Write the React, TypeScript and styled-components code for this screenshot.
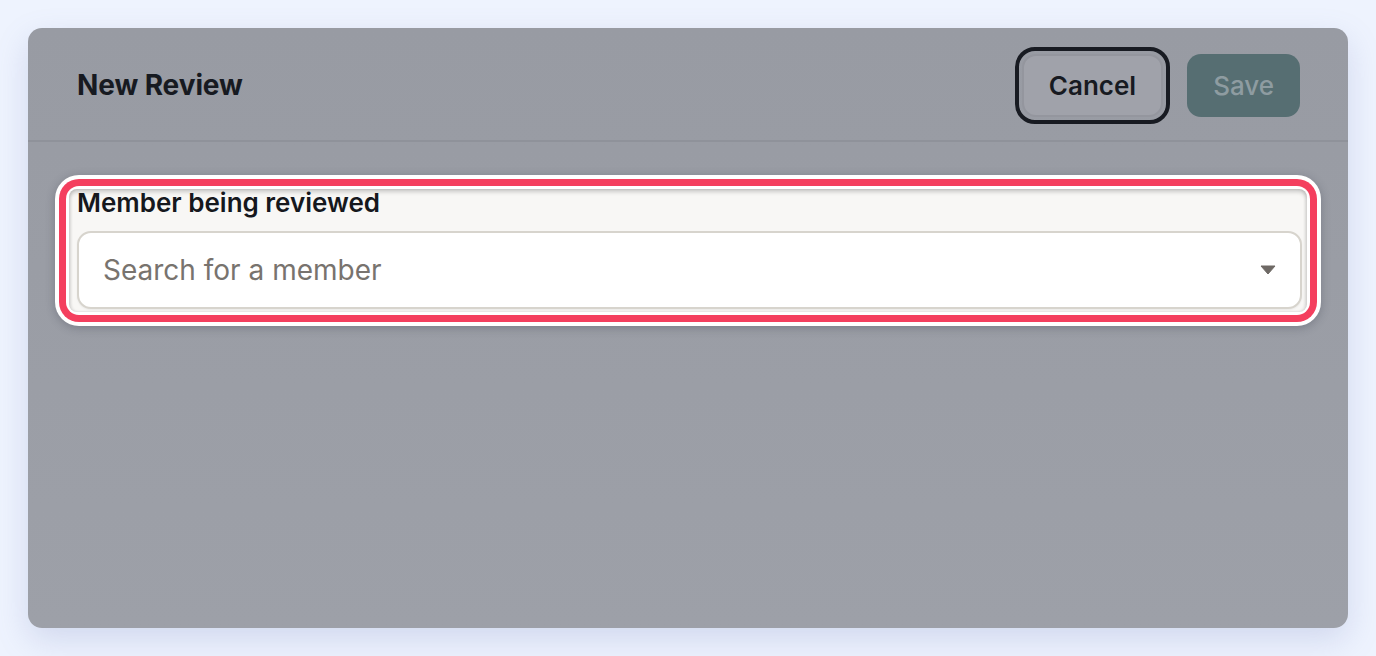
import React from "react";
import styled, { createGlobalStyle } from "styled-components";

const GlobalStyle = createGlobalStyle`
  * { box-sizing: border-box; }
  html, body {
    margin: 0;
    background: #eef3fe;
    font-family: Inter, "Noto Sans", "DejaVu Sans", sans-serif;
  }
`;

const Page = styled.div`
  padding: 28px;
`;

const Card = styled.div`
  height: 600px;
  border-radius: 14px;
  background: linear-gradient(#989ba3, #9da0a8);
  box-shadow: 0 12px 32px rgba(110, 125, 180, 0.22);
  overflow: hidden;
  display: flex;
  flex-direction: column;
`;

const Header = styled.div`
  height: 114px;
  flex: none;
  display: flex;
  align-items: center;
  justify-content: space-between;
  padding: 2px 48px 0 49px;
  border-bottom: 2px solid #8f929a;
`;

const Title = styled.h2`
  margin: 0;
  font-size: 28px;
  font-weight: 700;
  color: #171a21;
  letter-spacing: -0.1px;
`;

const Actions = styled.div`
  display: flex;
  align-items: center;
  gap: 17px;
`;

const FocusRing = styled.div`
  padding: 3px;
  border: 4px solid #181b22;
  border-radius: 20px;
`;

const Button = styled.button<{ $primary?: boolean }>`
  height: 63px;
  padding: 0 ${(p) => (p.$primary ? "26px" : "25px")};
  border-radius: 14px;
  font-family: inherit;
  font-size: 26px;
  cursor: pointer;
  border: ${(p) => (p.$primary ? "none" : "2px solid #94969e")};
  background: ${(p) => (p.$primary ? "#566e72" : "#a0a2aa")};
  color: ${(p) => (p.$primary ? "#8e9ca1" : "#171a21")};
  font-weight: ${(p) => (p.$primary ? 500 : 600)};
`;

const Body = styled.div`
  padding: 33px 27px;
`;

const Spotlight = styled.div`
  padding: 4px;
  border-radius: 24px;
  background: #ffffff;
  box-shadow: 0 2px 10px rgba(40, 44, 60, 0.28);
`;

const Ring = styled.div`
  padding: 7px;
  border-radius: 20px;
  background: #f43f5e;
`;

const Inner = styled.div`
  padding: 3px;
  border-radius: 13px;
  background: #ffffff;
`;

const Field = styled.div`
  display: flex;
  flex-direction: column;
  gap: 15px;
  padding: 0 5px 3px 8px;
  border-radius: 8px;
  background: #f8f7f5;
  box-shadow: inset 0 3px 4px rgba(0, 0, 0, 0.18), inset 2px 0 3px rgba(0, 0, 0, 0.08),
    inset -2px 0 3px rgba(0, 0, 0, 0.08);
`;

const Label = styled.label`
  font-size: 26px;
  font-weight: 600;
  line-height: 27px;
  color: #16181d;
`;

const Select = styled.div`
  height: 78px;
  display: flex;
  align-items: center;
  justify-content: space-between;
  padding: 0 24px;
  background: #ffffff;
  border: 2px solid #d7d4cd;
  border-radius: 14px;
  box-shadow: 0 1px 2px rgba(0, 0, 0, 0.06);
`;

const Placeholder = styled.span`
  font-size: 28px;
  color: #78736e;
`;

const Caret = () => (
  <svg width="16" height="10" viewBox="0 0 16 10">
    <path d="M1 1h14l-7 8z" fill="#6e6965" stroke="#6e6965" strokeLinejoin="round" />
  </svg>
);

export default function App() {
  return (
    <>
      <GlobalStyle />
      <Page>
        <Card>
          <Header>
            <Title>New Review</Title>
            <Actions>
              <FocusRing>
                <Button>Cancel</Button>
              </FocusRing>
              <Button $primary>Save</Button>
            </Actions>
          </Header>
          <Body>
            <Spotlight>
              <Ring>
                <Inner>
                  <Field>
                    <Label>Member being reviewed</Label>
                    <Select>
                      <Placeholder>Search for a member</Placeholder>
                      <Caret />
                    </Select>
                  </Field>
                </Inner>
              </Ring>
            </Spotlight>
          </Body>
        </Card>
      </Page>
    </>
  );
}
